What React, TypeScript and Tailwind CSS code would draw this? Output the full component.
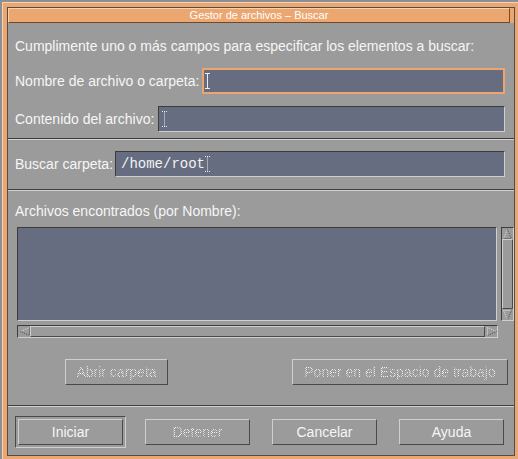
import React from "react";

const sunken =
  "border border-t-[#3c3c3c] border-l-[#3c3c3c] border-b-[#cfcfcf] border-r-[#cfcfcf]";
const raised =
  "border border-t-[#cfcfcf] border-l-[#cfcfcf] border-b-[#4a4a4a] border-r-[#4a4a4a]";
const stipple =
  "text-transparent bg-clip-text bg-[image:repeating-conic-gradient(#f2f2f2_0%_25%,transparent_0%_50%)] bg-size-[2px_2px]";

function Caret({ dotted }: { dotted?: boolean }) {
  return (
    <svg width="5" height="16" viewBox="0 0 5 16" className="shrink-0">
      <path
        d="M0 0.5H5M2.5 0.5V15.5M0 15.5H5"
        stroke="#ececec"
        strokeWidth="1"
        fill="none"
        strokeDasharray={dotted ? "1 1" : undefined}
      />
    </svg>
  );
}

function Separator() {
  return (
    <div className="flex flex-col shrink-0">
      <div className="h-px bg-[#3e3e3e]" />
      <div className="h-px bg-[#d2d2d2]" />
    </div>
  );
}

function Arrow({ dir }: { dir: "up" | "down" | "left" | "right" }) {
  const pts: Record<string, { light: string; dark: string }> = {
    up: { light: "M1.5 10.5L5.5 1.5", dark: "M5.5 1.5L9.5 10.5M1.5 10.5H9.5" },
    down: { light: "M1.5 1.5H9.5M1.5 1.5L5.5 10.5", dark: "M9.5 1.5L5.5 10.5" },
    left: { light: "M10.5 1.5L1.5 5.5", dark: "M1.5 5.5L10.5 9.5M10.5 1.5V9.5" },
    right: { light: "M1.5 1.5V9.5M1.5 1.5L10.5 5.5", dark: "M10.5 5.5L1.5 9.5" },
  };
  return (
    <svg width="11" height="11" viewBox="0 0 11 11" className="shrink-0">
      <path d={pts[dir].light} stroke="#e0e0e0" strokeWidth="1" fill="none" strokeDasharray="1 1" />
      <path d={pts[dir].dark} stroke="#4a4a4a" strokeWidth="1" fill="none" strokeDasharray="1 1" />
    </svg>
  );
}

function Button({
  label,
  width,
  disabled,
}: {
  label: string;
  width: string;
  disabled?: boolean;
}) {
  return (
    <div
      className={`${raised} ${width} h-[26px] shrink-0 flex items-center justify-center bg-[#9b9b9b]`}
    >
      <span
        className={`text-[14px] leading-[17px] whitespace-nowrap ${
          disabled ? stipple : "text-[#f6f6f6]"
        }`}
      >
        {label}
      </span>
    </div>
  );
}

export default function App() {
  return (
    <div className="w-[518px] h-[459px] overflow-hidden relative bg-[#8b8f97] font-['Liberation_Sans',Arial,sans-serif]">
      <div className="absolute left-[2px] top-[2px] w-[518px] h-[459px] border border-t-[#f9d2ae] border-l-[#f9d2ae] border-b-[#8a5a36] border-r-[#8a5a36] bg-[#eca670] p-[4px]">
        <div className="w-full h-full border border-[#4e4e4e] flex flex-col bg-[#eca670]">
          {/* title bar */}
          <div className="flex h-[15px] shrink-0">
            <div className="w-[502px] h-[15px] border border-t-[#f9d2ae] border-l-[#f9d2ae] border-b-[#6e4a2c] border-r-[#6e4a2c] bg-[#eca670] flex items-center justify-center">
              <span className="text-[11px] leading-[13px] text-white whitespace-nowrap">
                Gestor de archivos – Buscar
              </span>
            </div>
          </div>

          {/* content */}
          <div className="flex-1 bg-[#9b9b9b] flex flex-col text-[#f6f6f6]">
            {/* section 1 */}
            <div className="flex flex-col pt-[15px] pb-[6px]">
              <div className="pl-[7px] text-[14px] leading-[17px] whitespace-nowrap">
                Cumplimente uno o más campos para especificar los elementos a buscar:
              </div>
              <div className="flex items-center pl-[7px] pr-[9px] mt-[13px]">
                <div className="w-[187px] shrink-0 text-[14px] leading-[17px] whitespace-nowrap">
                  Nombre de archivo o carpeta:
                </div>
                <div className="flex-1 h-[26px] border-2 border-[#eea46c] bg-[#676d80] flex items-center pl-[1px]">
                  <Caret />
                </div>
              </div>
              <div className="flex items-center pl-[7px] pr-[9px] mt-[12px]">
                <div className="w-[143px] shrink-0 text-[14px] leading-[17px] whitespace-nowrap">
                  Contenido del archivo:
                </div>
                <div className={`flex-1 h-[26px] ${sunken} bg-[#676d80] flex items-center pl-[3px]`}>
                  <Caret dotted />
                </div>
              </div>
            </div>
            <Separator />

            {/* section 2 */}
            <div className="flex items-center pl-[7px] pr-[9px] pt-[11px] pb-[12px]">
              <div className="w-[100px] shrink-0 text-[14px] leading-[17px] whitespace-nowrap">
                Buscar carpeta:
              </div>
              <div className={`flex-1 h-[26px] ${sunken} bg-[#676d80] flex items-center pl-[5px]`}>
                <span className="font-['Liberation_Mono','Courier_New',monospace] text-[14px] leading-[17px] text-[#f2f2f2]">
                  /home/root
                </span>
                <Caret dotted />
              </div>
            </div>
            <Separator />

            {/* section 3 */}
            <div className="flex flex-col pt-[12px] pb-[20px]">
              <div className="pl-[7px] text-[14px] leading-[17px] whitespace-nowrap">
                Archivos encontrados (por Nombre):
              </div>
              <div className="flex pl-[9px] mt-[7px] gap-[4px]">
                <div className={`w-[481px] h-[94px] ${sunken} bg-[#676d80]`} />
                <div className={`w-[13px] h-[94px] ${sunken} flex flex-col`}>
                  <div className="h-[11px] flex items-center justify-center">
                    <Arrow dir="up" />
                  </div>
                  <div className={`flex-1 ${raised} bg-[#9b9b9b]`} />
                  <div className="h-[11px] flex items-center justify-center">
                    <Arrow dir="down" />
                  </div>
                </div>
              </div>
              <div className="flex pl-[9px] mt-[4px]">
                <div className={`w-[481px] h-[13px] ${sunken} flex`}>
                  <div className="w-[12px] flex items-center justify-center">
                    <Arrow dir="left" />
                  </div>
                  <div className={`flex-1 ${raised} bg-[#9b9b9b]`} />
                  <div className="w-[12px] flex items-center justify-center">
                    <Arrow dir="right" />
                  </div>
                </div>
              </div>
              <div className="flex pl-[57px] pr-[6px] mt-[21px]">
                <Button label="Abrir carpeta" width="w-[103px]" disabled />
                <div className="ml-auto">
                  <Button label="Poner en el Espacio de trabajo" width="w-[216px]" disabled />
                </div>
              </div>
            </div>
            <Separator />

            {/* section 4 */}
            <div className="flex pl-[10px] pt-[12px] gap-[22px]">
              <div className="relative w-[105px] h-[26px] shrink-0">
                <div className="absolute -inset-[3px] border border-t-[#4a4a4a] border-l-[#4a4a4a] border-b-[#cfcfcf] border-r-[#cfcfcf]" />
                <Button label="Iniciar" width="w-[105px]" />
              </div>
              <Button label="Detener" width="w-[105px]" disabled />
              <Button label="Cancelar" width="w-[105px]" />
              <Button label="Ayuda" width="w-[105px]" />
            </div>
          </div>
        </div>
      </div>
    </div>
  );
}
